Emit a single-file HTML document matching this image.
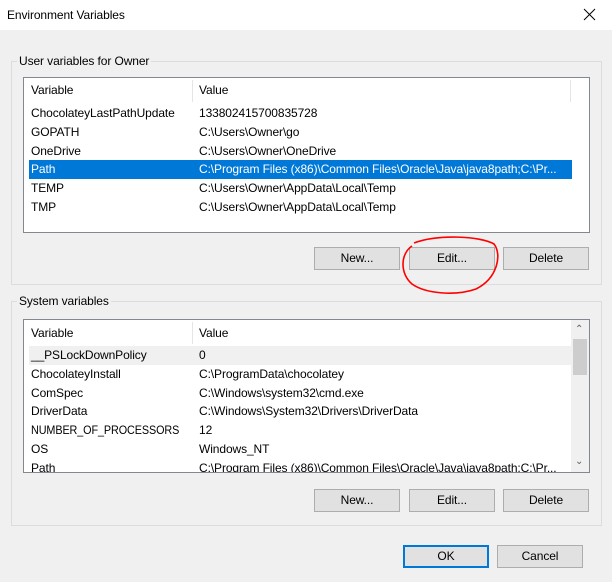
<!DOCTYPE html>
<html><head><style>
*{margin:0;padding:0;box-sizing:border-box}
body{width:612px;height:582px;background:#f0f0f0;font-family:"Liberation Sans",sans-serif;font-size:12px;color:#000;position:relative;overflow:hidden;letter-spacing:-0.1px}
.a{position:absolute}
.title{left:0;top:0;width:612px;height:30px;background:#fff}
.group{border:1px solid #dcdcdc}
.glabel{background:#f0f0f0;padding:0 2px;line-height:14px}
.list{background:#fff;border:1px solid #828790;overflow:hidden}
.t{position:absolute;white-space:nowrap;line-height:19px;height:19px}
.btn{position:absolute;background:#e1e1e1;border:1px solid #adadad;text-align:center;line-height:21px;height:23px;width:86px}
</style></head><body>
<div class="a title"></div>
<div class="a" style="left:7px;top:8px;line-height:14px">Environment Variables</div>
<svg class="a" style="left:583px;top:8px" width="14" height="14"><path d="M1 1L12 12M12 1L1 12" stroke="#000" stroke-width="1"/></svg>

<div class="a group" style="left:11px;top:61px;width:591px;height:224px"></div>
<div class="a glabel" style="left:17px;top:54px">User variables for Owner</div>
<div class="a list" style="left:23px;top:77px;width:567px;height:156px">
 <div class="a" style="left:168px;top:2px;width:1px;height:22px;background:#e5e5e5"></div>
 <div class="a" style="left:546px;top:2px;width:1px;height:22px;background:#e5e5e5"></div>
 <div class="t" style="left:7px;top:3px">Variable</div><div class="t" style="left:175px;top:3px">Value</div>
 <div class="t" style="left:7px;top:26px">ChocolateyLastPathUpdate</div><div class="t" style="left:175px;top:26px">133802415700835728</div>
 <div class="t" style="left:7px;top:45px">GOPATH</div><div class="t" style="left:175px;top:45px">C:\Users\Owner\go</div>
 <div class="t" style="left:7px;top:64px">OneDrive</div><div class="t" style="left:175px;top:64px">C:\Users\Owner\OneDrive</div>
 <div class="a" style="left:5px;top:82px;width:543px;height:19px;background:#0078d7"></div>
 <div class="t" style="left:7px;top:82px;color:#fff">Path</div><div class="t" style="left:175px;top:82px;color:#fff">C:\Program Files (x86)\Common Files\Oracle\Java\java8path;C:\Pr...</div>
 <div class="t" style="left:7px;top:101px">TEMP</div><div class="t" style="left:175px;top:101px">C:\Users\Owner\AppData\Local\Temp</div>
 <div class="t" style="left:7px;top:120px">TMP</div><div class="t" style="left:175px;top:120px">C:\Users\Owner\AppData\Local\Temp</div>
</div>
<div class="btn" style="left:314px;top:247px">New...</div>
<div class="btn" style="left:409px;top:247px">Edit...</div>
<div class="btn" style="left:503px;top:247px">Delete</div>
<svg class="a" style="left:398px;top:234px" width="106" height="64"><path d="M16 9C40 0 82 2 96 10C104 20 100 44 78 55C58 62 28 60 14 50C2 40 2 20 14 12" fill="none" stroke="#f00" stroke-width="1.6"/></svg>

<div class="a group" style="left:11px;top:301px;width:591px;height:225px"></div>
<div class="a glabel" style="left:17px;top:294px">System variables</div>
<div class="a list" style="left:23px;top:319px;width:567px;height:154px">
 <div class="a" style="left:168px;top:2px;width:1px;height:22px;background:#e5e5e5"></div>
 <div class="a" style="left:547px;top:0;width:18px;height:152px;background:#f0f0f0"></div>
 <div class="a" style="left:549px;top:19px;width:14px;height:36px;background:#cdcdcd"></div>
 <div class="a" style="left:551px;top:4px;font-size:10px;color:#606060">&#8963;</div>
 <div class="a" style="left:551px;top:136px;font-size:10px;color:#606060">&#8964;</div>
 <div class="t" style="left:7px;top:4px">Variable</div><div class="t" style="left:175px;top:4px">Value</div>
 <div class="a" style="left:5px;top:26px;width:542px;height:19px;background:#f0f0f0"></div>
 <div class="t" style="left:7px;top:26px">__PSLockDownPolicy</div><div class="t" style="left:175px;top:26px">0</div>
 <div class="t" style="left:7px;top:45px">ChocolateyInstall</div><div class="t" style="left:175px;top:45px">C:\ProgramData\chocolatey</div>
 <div class="t" style="left:7px;top:64px">ComSpec</div><div class="t" style="left:175px;top:64px">C:\Windows\system32\cmd.exe</div>
 <div class="t" style="left:7px;top:82px">DriverData</div><div class="t" style="left:175px;top:82px">C:\Windows\System32\Drivers\DriverData</div>
 <div class="t" style="left:7px;top:101px;transform:scaleX(0.9);transform-origin:left">NUMBER_OF_PROCESSORS</div><div class="t" style="left:175px;top:101px">12</div>
 <div class="t" style="left:7px;top:120px">OS</div><div class="t" style="left:175px;top:120px">Windows_NT</div>
 <div class="t" style="left:7px;top:139px">Path</div><div class="t" style="left:175px;top:139px">C:\Program Files (x86)\Common Files\Oracle\Java\java8path;C:\Pr...</div>
</div>
<div class="btn" style="left:314px;top:489px">New...</div>
<div class="btn" style="left:409px;top:489px">Edit...</div>
<div class="btn" style="left:503px;top:489px">Delete</div>

<div class="btn" style="left:403px;top:545px;border:2px solid #0078d7;line-height:19px">OK</div>
<div class="btn" style="left:497px;top:545px">Cancel</div>
</body></html>
